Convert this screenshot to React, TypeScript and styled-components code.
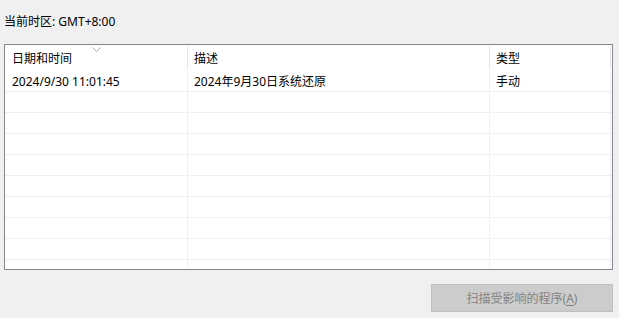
import React from "react";
import styled, { createGlobalStyle } from "styled-components";

const Global = createGlobalStyle`
  html, body { margin: 0; padding: 0; background: #f0f0f0; }
  body {
    font-family: "Noto Sans", "Noto Sans CJK SC", sans-serif;
    font-size: 12px;
    color: #000;
  }
`;

const Page = styled.div`
  display: flex;
  flex-direction: column;
  padding: 14px 6px 0 4px;
  width: 619px;
  height: 318px;
  box-sizing: border-box;
`;

const ZoneLabel = styled.div`
  height: 16px;
  line-height: 16px;
  margin-bottom: 14px;
  white-space: nowrap;
`;

const ListBox = styled.div`
  height: 226px;
  box-sizing: border-box;
  border: 1px solid #828790;
  background: #fff;
  overflow: hidden;
  display: flex;
  flex-direction: column;
`;

const COLS = "183px 302px 121px 1fr";

const HeaderRow = styled.div`
  display: grid;
  grid-template-columns: ${COLS};
  height: 26px;
  flex-shrink: 0;
`;

const HeaderCell = styled.div<{ $pad: number; $sep?: boolean }>`
  position: relative;
  display: flex;
  align-items: center;
  padding-left: ${(p) => p.$pad}px;
  padding-bottom: 1px;
  box-sizing: border-box;
  white-space: nowrap;
  &::after {
    content: "";
    display: ${(p) => (p.$sep === false ? "none" : "block")};
    position: absolute;
    right: 0;
    top: 1px;
    bottom: 2px;
    width: 1px;
    background: #e5e5e5;
  }
`;

const SortArrow = styled.svg`
  position: absolute;
  left: 87px;
  top: 2px;
`;

const Row = styled.div`
  display: grid;
  grid-template-columns: ${COLS};
  height: 21px;
  flex-shrink: 0;
  box-sizing: border-box;
  border-bottom: 1px solid #f0f0f0;
`;

const Cell = styled.div<{ $pad: number; $line?: boolean }>`
  display: flex;
  align-items: center;
  padding-left: ${(p) => p.$pad}px;
  box-sizing: border-box;
  white-space: nowrap;
  border-right: ${(p) => (p.$line === false ? "none" : "1px solid #f0f0f0")};
`;

const ButtonBar = styled.div`
  display: flex;
  justify-content: flex-end;
  margin-top: 14px;
`;

const ScanButton = styled.button`
  width: 182px;
  height: 28px;
  box-sizing: border-box;
  background: #cccccc;
  border: 1px solid #bfbfbf;
  color: #838383;
  font-family: inherit;
  font-size: 12px;
  padding: 0;
  margin: 0;
  cursor: default;
  & u { text-decoration: underline; text-underline-offset: 2px; }
`;

const rows = [
  { date: "2024/9/30 11:01:45", desc: "2024年9月30日系统还原", type: "手动" },
  ...Array.from({ length: 9 }, () => ({ date: "", desc: "", type: "" })),
];

export default function App() {
  return (
    <>
      <Global />
      <Page>
        <ZoneLabel>当前时区: GMT+8:00</ZoneLabel>
        <ListBox>
          <HeaderRow>
            <HeaderCell $pad={7}>
              日期和时间
              <SortArrow width="9" height="5" viewBox="0 0 9 5">
                <path d="M0.5 0.5 L4.5 4.5 L8.5 0.5" fill="none" stroke="#a8a8a8" strokeWidth="1" />
              </SortArrow>
            </HeaderCell>
            <HeaderCell $pad={6}>描述</HeaderCell>
            <HeaderCell $pad={6}>类型</HeaderCell>
            <HeaderCell $pad={0} $sep={false} />
          </HeaderRow>
          {rows.map((r, i) => (
            <Row key={i}>
              <Cell $pad={7}>{r.date}</Cell>
              <Cell $pad={6}>{r.desc}</Cell>
              <Cell $pad={6}>{r.type}</Cell>
              <Cell $pad={0} $line={false} />
            </Row>
          ))}
        </ListBox>
        <ButtonBar>
          <ScanButton>
            扫描受影响的程序(<u>A</u>)
          </ScanButton>
        </ButtonBar>
      </Page>
    </>
  );
}
